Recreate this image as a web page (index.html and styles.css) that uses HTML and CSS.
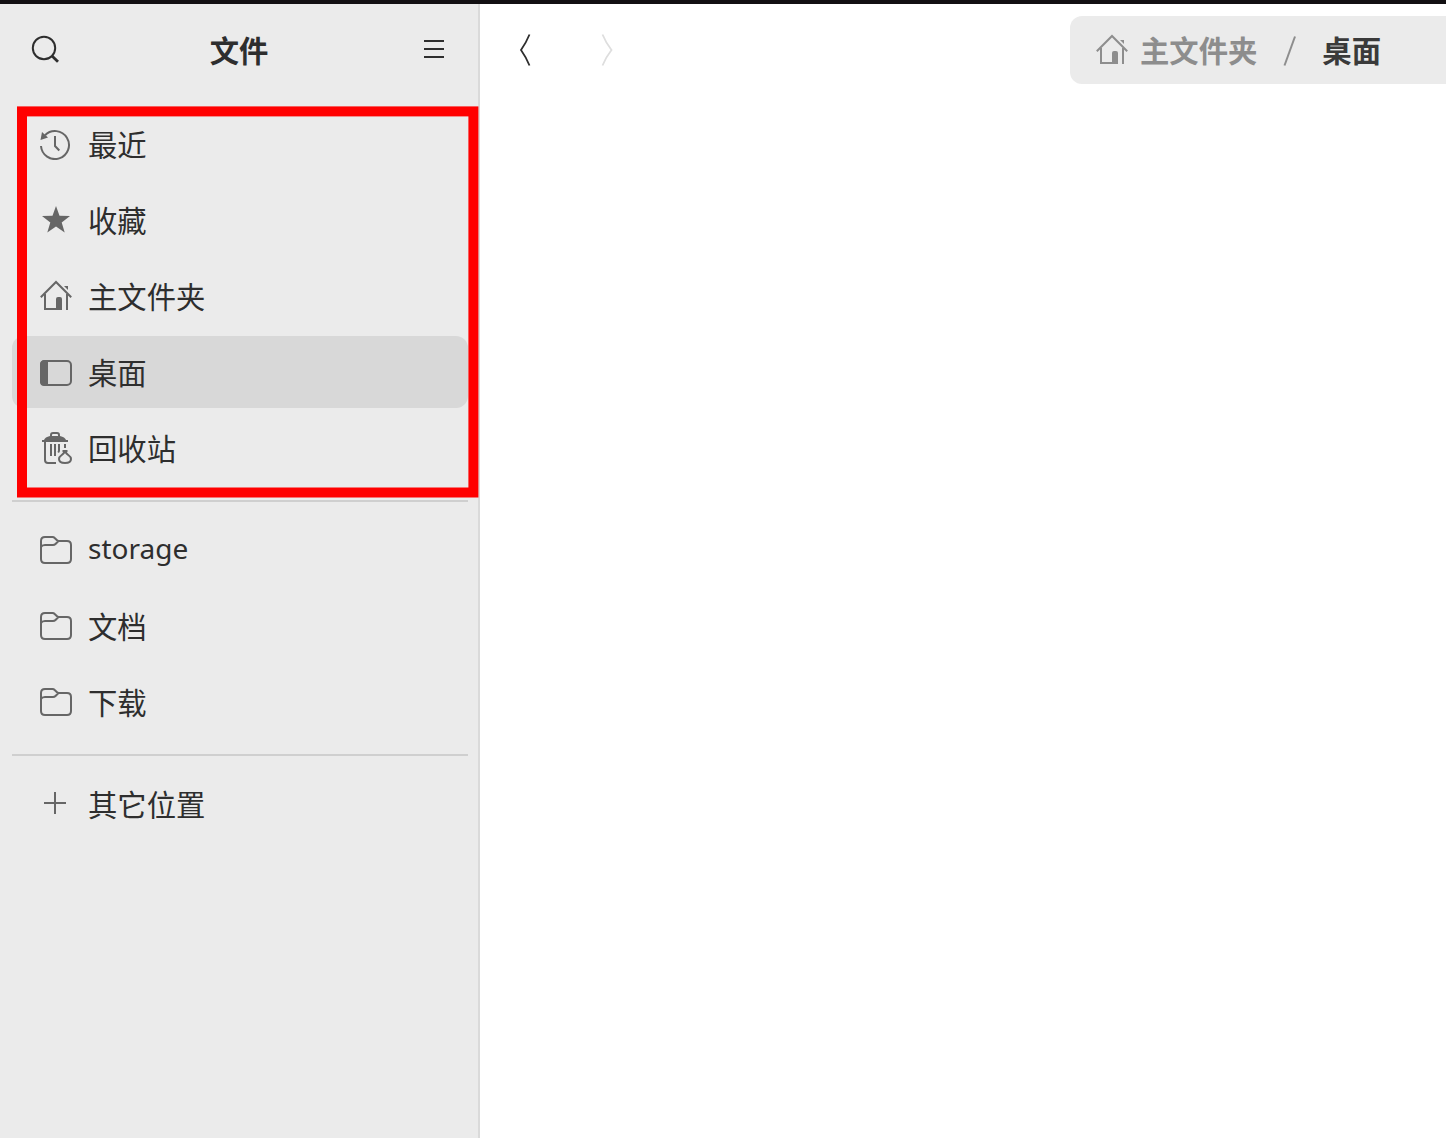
FILE: index.html
```html
<!DOCTYPE html>
<html lang="zh-CN">
<head>
<meta charset="utf-8">
<title>文件</title>
<link rel="stylesheet" href="styles.css">
</head>
<body>
<svg class="sprite" aria-hidden="true">
  <symbol id="home" viewBox="0 0 32 32">
    <path d="M.8 17.2 16 2l15.2 15.2M5 14v15h13M27 14v16" fill="none" stroke="currentColor" stroke-width="2"/>
    <path d="M16 30V19q0-2 2-2h2q2 0 2 2v11zM24 6h4v4z" fill="currentColor"/>
  </symbol>
  <symbol id="folder" viewBox="0 0 32 32">
    <path d="M1 13V7q0-4 4-4h7.500q1.300 0 2.200 1l2.300 2.300q.7.700 1.700.700H27q4 0 4 4v14q0 4-4 4H5q-4 0-4-4V13q1-2 4-2h8q1.500 0 2.500-1L18.500 7" fill="none" stroke="currentColor" stroke-width="2"/>
  </symbol>
</svg>
<div class="window">
  <aside class="sidebar">
    <header class="sidebar-head">
      <svg class="icon" viewBox="0 0 32 32"><circle cx="14" cy="14" r="11.200" fill="none" stroke="currentColor" stroke-width="2"/><path d="m21.800 21.800 6.200 6" stroke="currentColor" stroke-width="2.800"/></svg>
      <h1 class="title">文件</h1>
      <svg class="icon" viewBox="0 0 32 32"><path d="M6 7h20M6 15h20M6 23h20" stroke="currentColor" stroke-width="2"/></svg>
    </header>
    <nav class="places">
      <ul class="group">
        <li class="place"><svg class="icon" viewBox="0 0 32 32"><path d="M1 18A14 14 0 1 0 5 7.200M15 8v10l4.300 4.500" fill="none" stroke="currentColor" stroke-width="2"/><path d="M2 4 .5 12l7.500-2.500z" fill="currentColor"/></svg><span>最近</span></li>
        <li class="place"><svg class="icon" viewBox="0 0 32 32"><path d="m16 2 3.500 9.800 10.500.2-8.300 6.400L24.700 28.500 16 22.500 7.300 28.500l3-10.100L2 12l10.500-.2z" fill="currentColor"/></svg><span>收藏</span></li>
        <li class="place"><svg class="icon"><use href="#home"/></svg><span>主文件夹</span></li>
        <li class="place selected"><svg class="icon" viewBox="0 0 32 32"><rect x="1" y="5" width="30" height="24" rx="4" fill="none" stroke="currentColor" stroke-width="2"/><path d="M8 4H4.500Q0 4 0 8.500v17Q0 30 4.500 30H8z" fill="currentColor"/></svg><span>桌面</span></li>
        <li class="place"><svg class="icon" viewBox="0 0 32 32"><path d="M11 5V3q0-2 2-2h4q2 0 2 2v2M5 9v19q0 3 3 3h8M11 12v12M15 12v12M19 12v6.500q0 1-.8 2M25 12v4M22.500 19h5" fill="none" stroke="currentColor" stroke-width="2"/><path d="M24 20.500h2c.5 2.500 5 3 5 6.500 0 2.700-2.500 4-6 4s-6-1.300-6-4c0-3.500 4.500-4 5-6.500z" fill="none" stroke="currentColor" stroke-width="2"/><path d="M2 10V8h2q1-3 6-4h10q5 1 6 4h2v2z" fill="currentColor"/></svg><span>回收站</span></li>
      </ul>
      <ul class="group">
        <li class="place"><svg class="icon"><use href="#folder"/></svg><span class="latin">storage</span></li>
        <li class="place"><svg class="icon"><use href="#folder"/></svg><span>文档</span></li>
        <li class="place"><svg class="icon"><use href="#folder"/></svg><span>下载</span></li>
      </ul>
      <ul class="group">
        <li class="place"><svg class="icon" viewBox="0 0 32 32"><path d="M4 15h22M15 4v22" stroke="currentColor" stroke-width="2"/></svg><span>其它位置</span></li>
      </ul>
    </nav>
  </aside>
  <main class="content">
    <div class="toolbar">
      <div class="history">
        <svg class="chevron" viewBox="0 0 12 32"><path d="M10.500.5Q7 9 2 16q5 7 8.500 15.500" fill="none" stroke="currentColor" stroke-width="1.800"/></svg>
        <svg class="chevron disabled" viewBox="0 0 12 32"><path d="M1.500.5Q5 9 10.500 16 5 23 1.500 31.500" fill="none" stroke="currentColor" stroke-width="1.800"/></svg>
      </div>
      <div class="pathbar">
        <svg class="icon"><use href="#home"/></svg>
        <span class="parent">主文件夹</span>
        <svg class="slash" viewBox="0 0 14 30"><path d="M1.500 29.500 12 .5" stroke="currentColor" stroke-width="2"/></svg>
        <span class="current">桌面</span>
      </div>
    </div>
  </main>
  <svg class="highlight" viewBox="0 0 462 392"><rect x="5" y="5.400" width="451.400" height="381.100" fill="none" stroke="#f00" stroke-width="10"/></svg>
</div>
</body>
</html>
```
FILE: styles.css
```css
* { box-sizing: border-box; }
body {
  margin: 0;
  background: #fff;
  color: #2e2e2e;
  font: 29.33px/44px "Noto Sans CJK SC", sans-serif;
}
.sprite { position: absolute; width: 0; height: 0; }
.window {
  position: relative;
  display: flex;
  height: 1138px;
  border-top: 4px solid #120f12;
  overflow: hidden;
}
.icon { flex: none; display: block; width: 32px; height: 32px; }
.sidebar {
  flex: none;
  width: 480px;
  background: #ebebeb;
  border-right: 2px solid #dadada;
}
.sidebar-head {
  display: flex;
  align-items: center;
  justify-content: space-between;
  height: 92px;
  padding: 0 28px 0 30px;
}
.title { margin: 0; padding: 0 2px 2px 0; font-size: 29.33px; font-weight: 700; }
.places { padding: 12px 10px 0 12px; }
.group {
  display: flex;
  flex-direction: column;
  gap: 4px;
  margin: 0;
  padding: 0;
  list-style: none;
}
.group + .group {
  margin-top: 16px;
  padding-top: 12px;
  border-top: 2px solid #cfcfcf;
}
.place {
  display: flex;
  align-items: center;
  gap: 16px;
  height: 72px;
  padding: 0 28px;
  border-radius: 12px;
}
.place span { padding-bottom: 2px; }
.place .icon { color: #666; }
.selected { background: #d8d8d8; }
.place .latin { padding-bottom: 4px; font-family: "Noto Sans", sans-serif; font-size: 28px; }
.content { flex: 1; min-width: 0; }
.toolbar {
  display: flex;
  align-items: center;
  justify-content: space-between;
  height: 92px;
  padding-left: 39px;
}
.history { display: flex; gap: 70px; }
.chevron { width: 12px; height: 32px; }
.disabled { color: #dedede; }
.pathbar {
  display: flex;
  align-items: center;
  width: 376px;
  height: 68px;
  padding-left: 26px;
  border-radius: 12px 0 0 12px;
  background: #ebebeb;
  color: #8d8d8d;
  font-weight: 700;
}
.pathbar span { padding-bottom: 2px; }
.parent { margin-left: 12px; }
.slash { width: 14px; height: 30px; margin: 2px 25px 0 26px; }
.current { color: #3a3a3a; }
.highlight {
  position: absolute;
  left: 17px;
  top: 102px;
  width: 462px;
  height: 392px;
}
```
